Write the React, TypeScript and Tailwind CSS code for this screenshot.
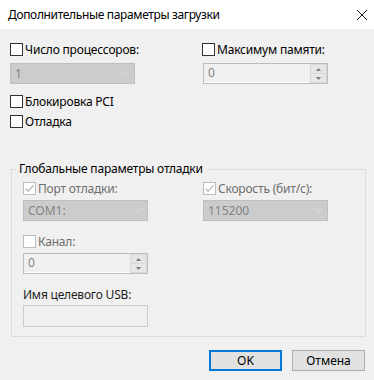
import React from 'react';

const font = { fontFamily: '"Noto Sans", "Liberation Sans", sans-serif' };

const CheckBox: React.FC<{ label: string; checked?: boolean; disabled?: boolean }> = ({ label, checked, disabled }) => (
  <div className="flex h-[13px] items-center">
    <div
      className={`relative h-[13px] w-[13px] shrink-0 border bg-white ${disabled ? 'border-[#bcbcbc]' : 'border-[#333333]'}`}
    >
      {checked && (
        <svg viewBox="0 0 11 11" className="absolute left-0 top-0 h-[11px] w-[11px]">
          <path d="M1.5 5.5 L4.2 8.2 L9.5 2.2" fill="none" stroke="#bcbcbc" strokeWidth="1.3" />
        </svg>
      )}
    </div>
    <span className={`ml-[2px] text-[12px] leading-[13px] tracking-[-0.2px] ${disabled ? 'text-[#6d6d6d]' : 'text-black'}`}>
      {label}
    </span>
  </div>
);

const Combo: React.FC<{ value: string }> = ({ value }) => (
  <div className="flex h-[21px] w-[125px] items-center justify-between border border-[#bfbfbf] bg-[#cccccc] pl-[4px] pr-[4px]">
    <span className="text-[12px] leading-none text-[#838383]">{value}</span>
    <svg viewBox="0 0 9 5" className="h-[5px] w-[9px]">
      <path d="M0.5 0.5 L4.5 4.5 L8.5 0.5" fill="none" stroke="#dedede" strokeWidth="1" />
    </svg>
  </div>
);

const Spinner: React.FC<{ value: string }> = ({ value }) => (
  <div className="flex h-[21px] w-[125px] border border-[#bcbcbc] bg-[#f0f0f0]">
    <div className="flex flex-1 items-center border-b border-white pl-[4px]">
      <span className="text-[12px] leading-none text-[#838383]">{value}</span>
    </div>
    <div className="flex w-[17px] flex-col gap-[1px] bg-[#d9d9d9] p-[1px]">
      <div className="flex flex-1 items-center justify-center bg-[#e6e6e6]">
        <svg viewBox="0 0 5 3" className="h-[3px] w-[5px]">
          <path d="M0 3 L2.5 0 L5 3 Z" fill="#7a7a7a" />
        </svg>
      </div>
      <div className="flex flex-1 items-center justify-center bg-[#e6e6e6]">
        <svg viewBox="0 0 5 3" className="h-[3px] w-[5px]">
          <path d="M0 0 L2.5 3 L5 0 Z" fill="#7a7a7a" />
        </svg>
      </div>
    </div>
  </div>
);

const Button: React.FC<{ label: string; primary?: boolean }> = ({ label, primary }) => (
  <div
    className={`flex h-[21px] w-[73px] items-center justify-center bg-[#e1e1e1] text-[12px] text-black ${
      primary ? 'border-2 border-[#0078d7]' : 'border border-[#adadad]'
    }`}
  >
    {label}
  </div>
);

export default function App() {
  return (
    <div className="h-[380px] w-[374px] overflow-hidden bg-[#f0f0f0]" style={font}>
      <div className="flex h-[29px] items-center justify-between bg-white pl-[8px] pr-[7px]">
        <span className="text-[12px] tracking-[-0.35px] text-black">Дополнительные параметры загрузки</span>
        <svg viewBox="0 0 10 10" className="h-[10px] w-[10px]">
          <path d="M0 0 L10 10 M10 0 L0 10" stroke="#111" strokeWidth="1" />
        </svg>
      </div>

      <div className="pl-[10px] pt-[14px]">
        <div className="grid grid-cols-[192px_1fr]">
          <div>
            <CheckBox label="Число процессоров:" />
            <div className="mt-[7px]">
              <Combo value="1" />
            </div>
          </div>
          <div>
            <CheckBox label="Максимум памяти:" />
            <div className="ml-[1px] mt-[7px]">
              <Spinner value="0" />
            </div>
          </div>
        </div>

        <div className="mt-[11px]">
          <CheckBox label="Блокировка PCI" />
        </div>
        <div className="mt-[7px]">
          <CheckBox label="Отладка" />
        </div>

        <fieldset className="ml-[1px] mt-[33px] w-[355px] border border-[#dcdcdc] p-0">
          <legend className="ml-[4px] px-[3px] text-[12px] leading-[16px] tracking-[-0.2px] text-black">
            Глобальные параметры отладки
          </legend>
          <div className="px-[11px] pb-[9px] pt-[5px]">
            <div className="grid grid-cols-[180px_1fr]">
              <div>
                <CheckBox label="Порт отладки:" checked disabled />
                <div className="mt-[5px]">
                  <Combo value="COM1:" />
                </div>
              </div>
              <div>
                <CheckBox label="Скорость (бит/с):" checked disabled />
                <div className="mt-[5px]">
                  <Combo value="115200" />
                </div>
              </div>
            </div>
            <div className="mt-[14px]">
              <CheckBox label="Канал:" disabled />
            </div>
            <div className="mt-[5px]">
              <Spinner value="0" />
            </div>
            <div className="mt-[13px] text-[12px] leading-[15px] tracking-[-0.2px] text-[#1e1e1e]">Имя целевого USB:</div>
            <div className="mt-[3px] h-[22px] w-[125px] border border-[#cccccc] bg-[#f0f0f0]" />
          </div>
        </fieldset>
      </div>

      <div className="mt-[13px] flex justify-end gap-[10px] pr-[9px]">
        <Button label="OK" primary />
        <Button label="Отмена" />
      </div>
    </div>
  );
}
